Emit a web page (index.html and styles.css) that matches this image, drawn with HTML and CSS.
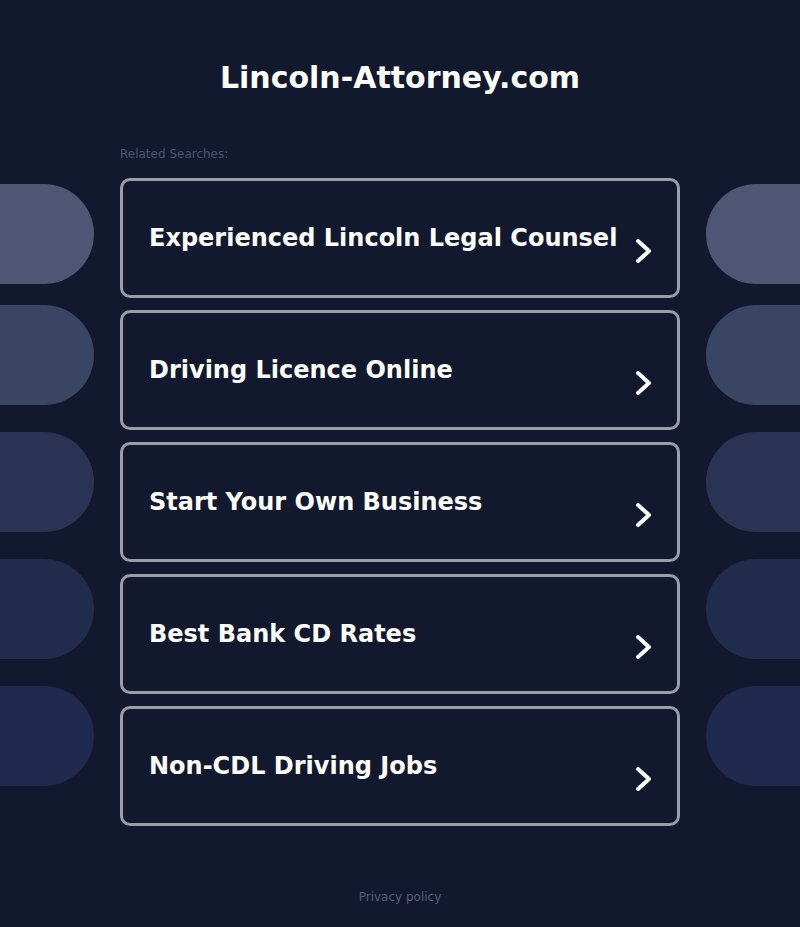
FILE: index.html
```html
<!DOCTYPE html>
<html lang="en">
<head>
    <meta charset="UTF-8">
    <meta name="viewport" content="width=device-width, initial-scale=1.0">
    <title>Lincoln-Attorney.com</title>
    <link rel="stylesheet" href="styles.css">
</head>

<body>
    <h1 class="domain">Lincoln-Attorney.com</h1>

    <div class="related">Related Searches:</div>

    <!-- pills on the sides, search links in the middle -->
    <section class="searches">
        <div class="side side-left">
            <span class="pill pill-1"></span>
            <span class="pill pill-2"></span>
            <span class="pill pill-3"></span>
            <span class="pill pill-4"></span>
            <span class="pill pill-5"></span>
        </div>

        <div class="links">
            <a class="link" href="#">
                <span>Experienced Lincoln Legal Counsel</span>
                <svg class="arrow" viewBox="0 0 18 28" width="18" height="28"><polyline points="4,4 15,14 4,24"/></svg>
            </a>
            <a class="link" href="#">
                <span>Driving Licence Online</span>
                <svg class="arrow" viewBox="0 0 18 28" width="18" height="28"><polyline points="4,4 15,14 4,24"/></svg>
            </a>
            <a class="link" href="#">
                <span>Start Your Own Business</span>
                <svg class="arrow" viewBox="0 0 18 28" width="18" height="28"><polyline points="4,4 15,14 4,24"/></svg>
            </a>
            <a class="link" href="#">
                <span>Best Bank CD Rates</span>
                <svg class="arrow" viewBox="0 0 18 28" width="18" height="28"><polyline points="4,4 15,14 4,24"/></svg>
            </a>
            <a class="link" href="#">
                <span>Non-CDL Driving Jobs</span>
                <svg class="arrow" viewBox="0 0 18 28" width="18" height="28"><polyline points="4,4 15,14 4,24"/></svg>
            </a>
        </div>

        <div class="side side-right">
            <span class="pill pill-1"></span>
            <span class="pill pill-2"></span>
            <span class="pill pill-3"></span>
            <span class="pill pill-4"></span>
            <span class="pill pill-5"></span>
        </div>
    </section>

    <footer class="footer">
        <a href="#">Privacy policy</a>
    </footer>
</body>
</html>
```

FILE: styles.css
```css
body {
    margin: 0;
    min-height: 927px;
    background-color: #12182e;
    font-family: "DejaVu Sans", "Liberation Sans", sans-serif;
}

.domain {
    margin: 0;
    padding-top: 60px;
    font-size: 30px;
    line-height: 36px;
    font-weight: bold;
    text-align: center;
    color: #ffffff;
}

.related {
    width: 560px;
    margin: 50px auto 0;
    font-size: 12px;
    line-height: 16px;
    color: #4c5570;
}

.searches {
    display: grid;
    grid-template-columns: 94px 560px 94px;
    column-gap: 26px;
    margin-top: 16px;
}

.side {
    display: flex;
    flex-direction: column;
    gap: 27px;
    padding-top: 6px;
}

.pill {
    display: block;
    height: 100px;
}

.side-left .pill {
    border-radius: 0 50px 50px 0;
}

.side-right .pill {
    border-radius: 50px 0 0 50px;
}

.pill-2 {
    margin-top: -6px;
}

.pill-1 { background-color: #4e5673; }
.pill-2 { background-color: #3a4463; }
.pill-3 { background-color: #2a3353; }
.pill-4 { background-color: #212b4c; }
.pill-5 { background-color: #1f2a4e; }

.links {
    display: flex;
    flex-direction: column;
    gap: 12px;
}

.link {
    display: flex;
    align-items: center;
    justify-content: space-between;
    box-sizing: border-box;
    height: 120px;
    padding: 0 25px 0 26px;
    border: 3px solid #9c9ea6;
    border-radius: 10px;
    background-color: #12182e;
    color: #ffffff;
    font-size: 24px;
    line-height: 28px;
    font-weight: bold;
    text-decoration: none;
}

.arrow {
    flex-shrink: 0;
    margin-top: 26px;
}

.arrow polyline {
    fill: none;
    stroke: #ffffff;
    stroke-width: 4;
    stroke-linecap: round;
    stroke-linejoin: round;
}

.footer {
    margin-top: 63px;
    padding-bottom: 22px;
    text-align: center;
    font-size: 12px;
    line-height: 16px;
}

.footer a {
    color: #565e78;
    text-decoration: none;
}
```
